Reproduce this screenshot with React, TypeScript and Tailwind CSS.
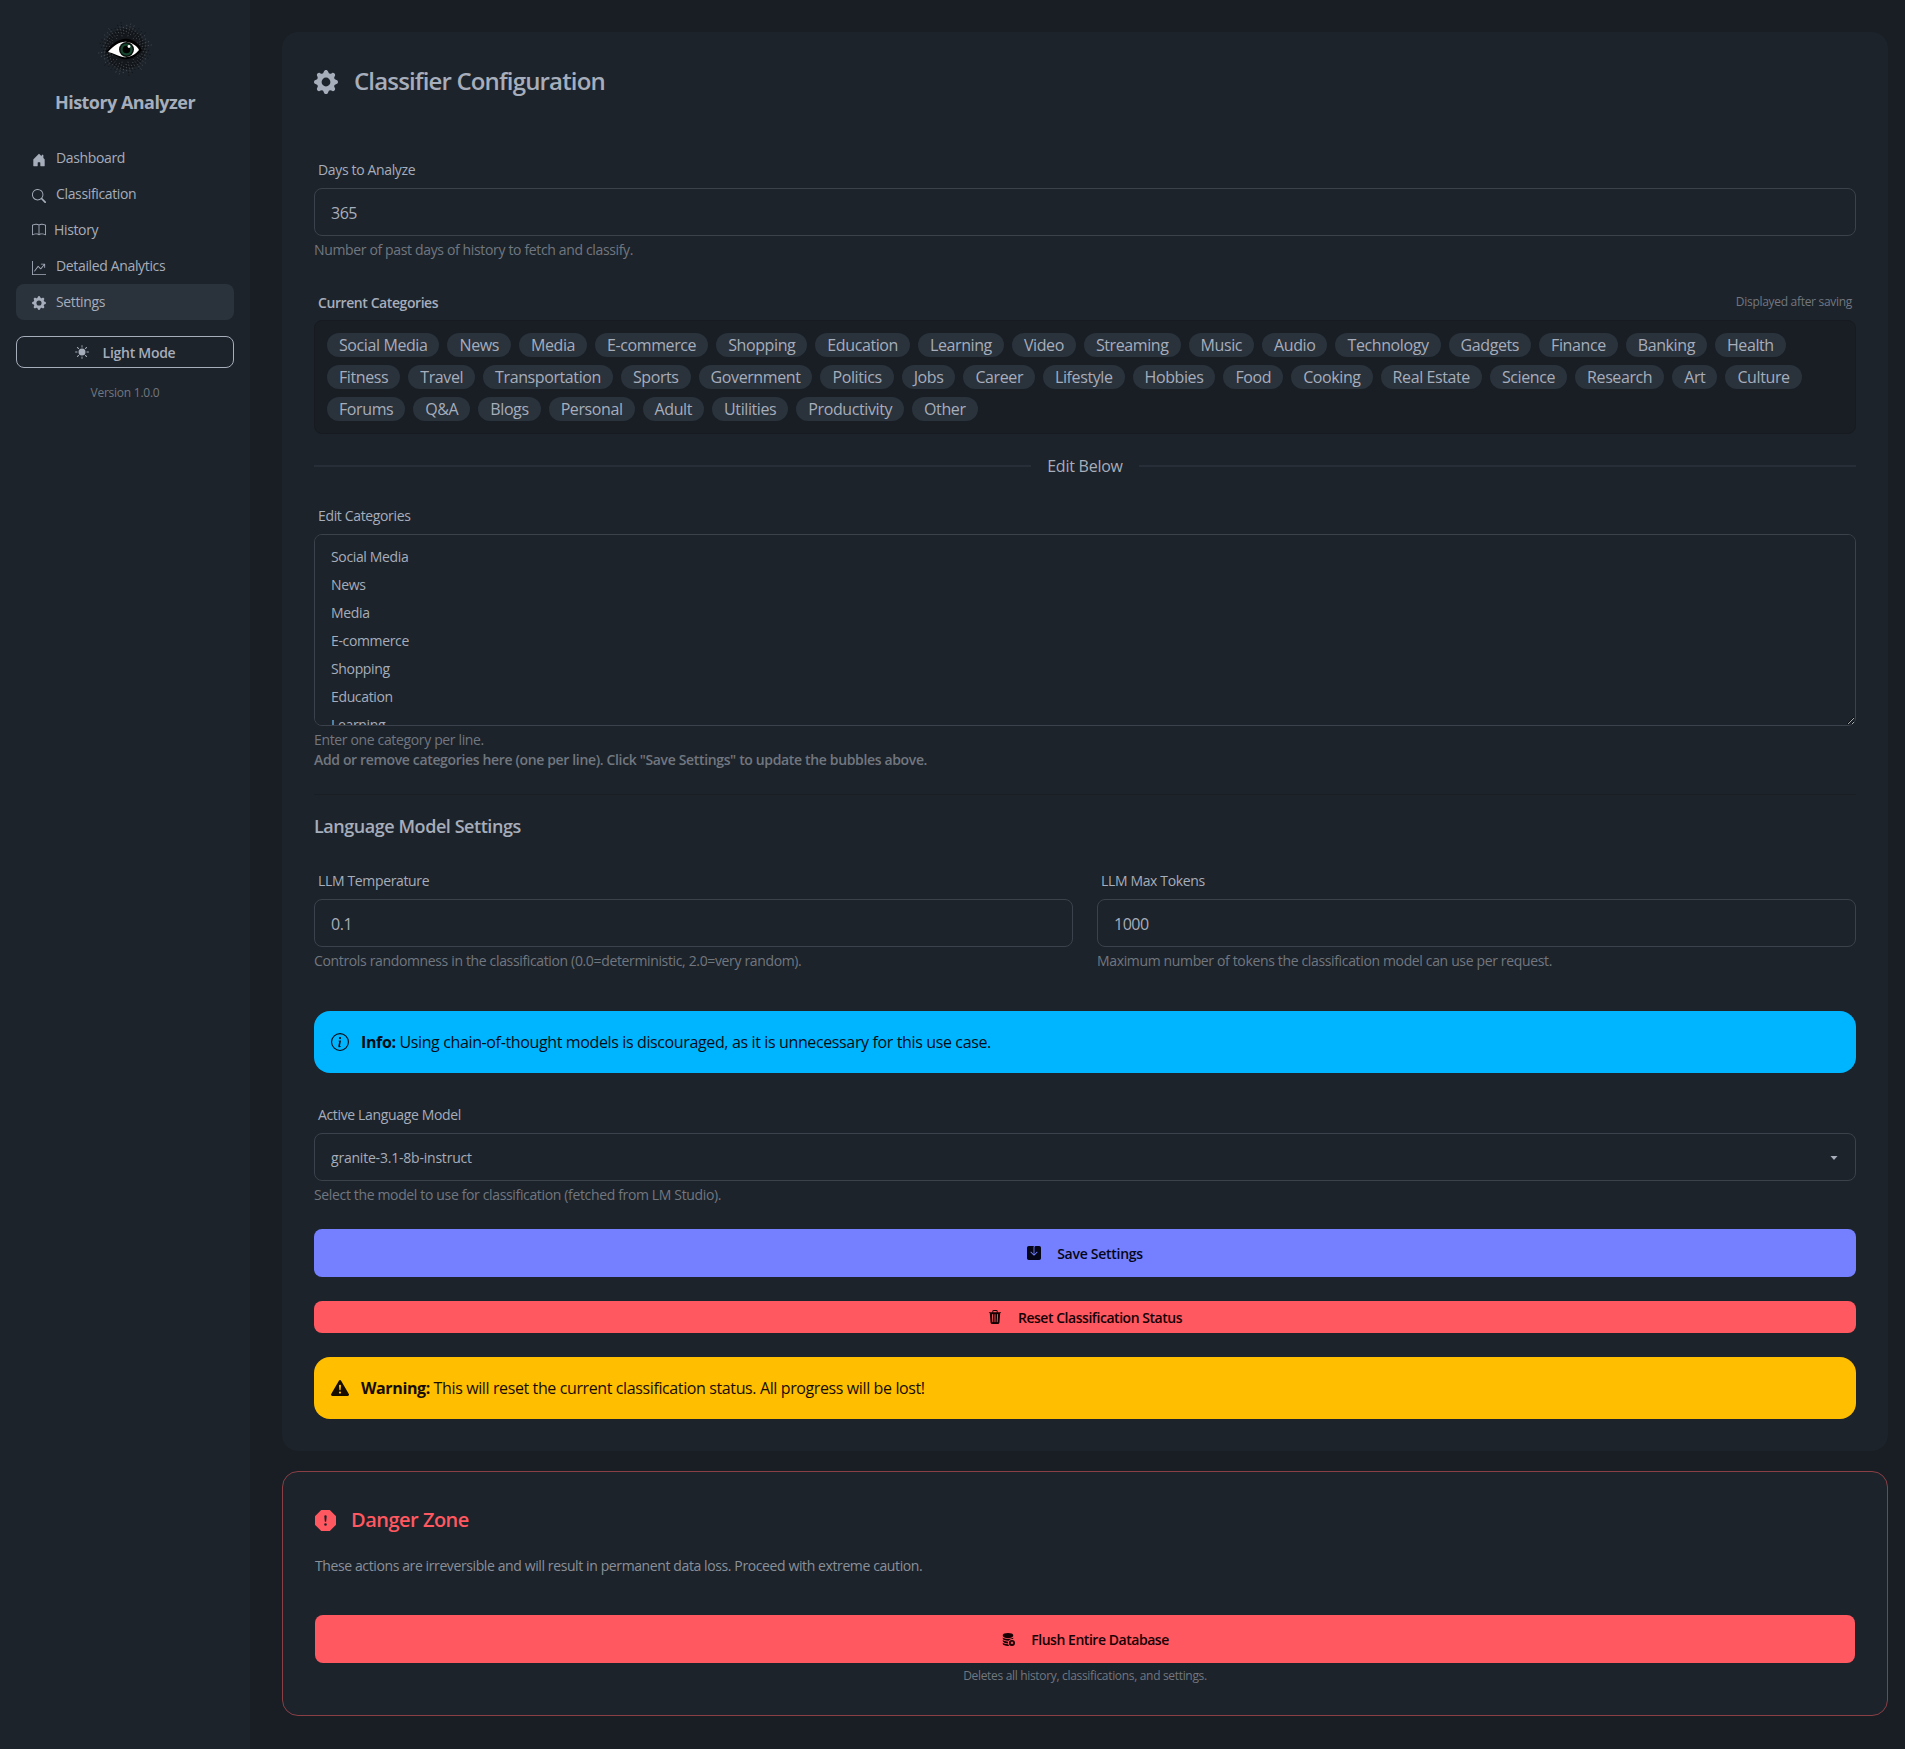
import React from "react";
import {
  BsHouseDoorFill, BsSearch, BsBook, BsGraphUpArrow, BsGearFill, BsSunFill, BsInfoCircle,
  BsExclamationTriangleFill, BsExclamationOctagonFill, BsSaveFill, BsTrash3Fill, BsDatabaseFillX,
} from "react-icons/bs";

const cats = ["Social Media","News","Media","E-commerce","Shopping","Education","Learning","Video","Streaming","Music","Audio","Technology","Gadgets","Finance","Banking","Health","Fitness","Travel","Transportation","Sports","Government","Politics","Jobs","Career","Lifestyle","Hobbies","Food","Cooking","Real Estate","Science","Research","Art","Culture","Forums","Q&A","Blogs","Personal","Adult","Utilities","Productivity","Other"];

function Logo() {
  const rays = Array.from({ length: 84 }, (_, i) => {
    const a = (i / 84) * Math.PI * 2;
    const r1 = 13 + (i * 7) % 6;
    const r2 = 21 + (i * 11) % 7;
    return { x1: 28 + Math.cos(a) * r1, y1: 28 + Math.sin(a) * r1, x2: 28 + Math.cos(a) * r2, y2: 28 + Math.sin(a) * r2 };
  });
  return (
    <svg width="56" height="56" viewBox="0 0 56 56">
      <circle cx="28" cy="28" r="20" fill="#14181d" />
      {rays.map((r, i) => (
        <line key={i} x1={r.x1} y1={r.y1} x2={r.x2} y2={r.y2} stroke={i % 2 === 0 ? "#50555b" : "#0b0d10"} strokeWidth="0.8" strokeDasharray="1.2 1.8" />
      ))}
      <path d="M9 31 C15 22 23 17 31 18 C38 19 43 24 45 29 C40 36 33 39 26 38 C21 37 16 32 9 31 Z" fill="#000" />
      <path d="M11 31 C17 24 24 20 30 21 C36 22 40 25 42 29 C38 34 32 37 26 36 C21 35 16 32 11 31 Z" fill="#fff" />
      <circle cx="29.5" cy="28.5" r="7.5" fill="#0a0f0c" />
      <circle cx="29.5" cy="28.5" r="6" fill="#14452c" />
      <circle cx="29.5" cy="28.5" r="3.8" fill="#000" />
      <circle cx="32" cy="25.5" r="1.4" fill="#fff" />
    </svg>
  );
}

function NavItem({ icon, label, active, gap = "gap-[10px]", offset = "mt-1" }: { icon: React.ReactNode; label: string; active?: boolean; gap?: string; offset?: string }) {
  return (
    <a className={`flex h-9 items-center ${gap} rounded-lg pl-4 text-[14px] text-[#a6adbb] ${active ? "bg-[#2a323c]" : ""}`}>
      <span className={`${offset} flex w-[14px] justify-center`}>{icon}</span>
      <span className="-mt-px">{label}</span>
    </a>
  );
}

function Label({ children }: { children: React.ReactNode }) {
  return <label className="block h-5 px-1 text-[14px] leading-5 text-[#a6adbb]">{children}</label>;
}

function Help({ children, className = "" }: { children: React.ReactNode; className?: string }) {
  return <p className={`h-5 text-[14px] leading-5 text-[#717780] ${className}`}>{children}</p>;
}

const fieldClass = "mt-2 block h-12 w-full rounded-lg border border-[#3b424c] bg-[#1d232a] px-4 pt-[2px] text-[16px] tracking-[-0.03em] text-[#a6adbb] outline-none";

export default function App() {
  return (
    <div className="flex min-h-screen bg-[#191e24] font-['Open_Sans',sans-serif] tracking-[-0.022em]">
      <aside className="w-[250px] shrink-0 bg-[#1d232a] px-4">
        <div className="flex h-[140px] flex-col items-center pt-[21px]">
          <Logo />
          <h1 className="mt-[11px] text-[18px] font-bold leading-7 tracking-[-0.03em] text-[#a6adbb]">History Analyzer</h1>
        </div>
        <nav>
          <NavItem icon={<BsHouseDoorFill size={14} color="#a6adbb" />} label="Dashboard" />
          <NavItem icon={<BsSearch size={14} color="#a6adbb" />} label="Classification" />
          <NavItem gap="gap-2" offset="" icon={<BsBook size={14} color="#a6adbb" />} label="History" />
          <NavItem icon={<BsGraphUpArrow size={14} color="#a6adbb" />} label="Detailed Analytics" />
          <NavItem active offset="mt-0.5" icon={<BsGearFill size={14} color="#a6adbb" />} label="Settings" />
        </nav>
        <button className="mt-4 flex h-8 w-full items-center justify-center gap-[14px] rounded-lg border border-[#a6adbb] text-[14px] font-semibold tracking-[-0.02em] text-[#a6adbb]">
          <BsSunFill size={14} />
          Light Mode
        </button>
        <p className="mt-[17px] text-center text-[12px] leading-4 tracking-[-0.02em] text-[#717780]">Version 1.0.0</p>
      </aside>

      <main className="flex min-w-0 flex-1 flex-col gap-5 pb-8 pl-8 pr-[17px] pt-8">
        <section className="rounded-2xl bg-[#1d232a] p-8">
          <div className="flex h-9 items-center gap-4 text-[#a6adbb]">
            <BsGearFill size={24} />
            <h2 className="-mt-0.5 text-[24px] font-semibold leading-9 tracking-[-0.035em]">Classifier Configuration</h2>
          </div>

          <div className="mt-[60px]">
            <Label>Days to Analyze</Label>
            <input className={fieldClass} defaultValue="365" />
            <Help className="mt-1">Number of past days of history to fetch and classify.</Help>
          </div>

          <div className="mt-8">
            <div className="flex h-5 items-center justify-between px-1">
              <span className="text-[14px] font-semibold tracking-[-0.03em] text-[#a6adbb]">Current Categories</span>
              <span className="text-[12px] tracking-[-0.025em] text-[#717780]">Displayed after saving</span>
            </div>
            <div className="mt-2 flex flex-wrap gap-2 rounded-lg border border-[#171b21] bg-[#191e24] p-3">
              {cats.map((c) => (
                <span key={c} className="flex h-6 items-center rounded-full bg-[#2a323c] px-3 text-[16px] tracking-[-0.025em] text-[#a6adbb]">{c}</span>
              ))}
            </div>
          </div>

          <div className="mt-5 flex h-6 items-center gap-4 text-[16px] tracking-[-0.015em] text-[#a6adbb]">
            <div className="h-0.5 flex-1 bg-[#272e37]" />
            <span>Edit Below</span>
            <div className="h-0.5 flex-1 bg-[#272e37]" />
          </div>

          <div className="mt-7">
            <Label>Edit Categories</Label>
            <textarea
              className="mt-2 block h-[192px] w-full rounded-lg border border-[#3b424c] bg-[#1d232a] px-4 py-2 text-[14px] leading-7 text-[#a6adbb] outline-none [scrollbar-width:none]"
              defaultValue={cats.join("\n")}
            />
            <Help className="mt-1">Enter one category per line.</Help>
            <Help className="font-semibold tracking-[-0.025em]">Add or remove categories here (one per line). Click "Save Settings" to update the bubbles above.</Help>
          </div>

          <div className="mt-6 border-t border-[#191e24] pt-[17px]">
            <h3 className="text-[18px] font-semibold leading-7 tracking-[-0.025em] text-[#a6adbb]">Language Model Settings</h3>
          </div>

          <div className="mt-[31px] grid grid-cols-2 gap-6">
            <div>
              <Label>LLM Temperature</Label>
              <input className={fieldClass} defaultValue="0.1" />
              <Help className="mt-1">Controls randomness in the classification (0.0=deterministic, 2.0=very random).</Help>
            </div>
            <div>
              <Label>LLM Max Tokens</Label>
              <input className={fieldClass} defaultValue="1000" />
              <Help className="mt-1">Maximum number of tokens the classification model can use per request.</Help>
            </div>
          </div>

          <div className="mt-10 flex h-[62px] items-center gap-3 rounded-2xl bg-[#00b5ff] px-[17px] text-[16px] tracking-[-0.023em] text-[#000c16]">
            <BsInfoCircle size={18} />
            <span><strong className="font-bold">Info:</strong> Using chain-of-thought models is discouraged, as it is unnecessary for this use case.</span>
          </div>

          <div className="mt-8">
            <Label>Active Language Model</Label>
            <div className="relative">
              <select className="mt-2 block h-12 w-full appearance-none rounded-lg border border-[#3b424c] bg-[#1d232a] px-4 text-[14px] tracking-[-0.015em] text-[#a6adbb] outline-none">
                <option>granite-3.1-8b-instruct</option>
              </select>
              <svg className="absolute right-[18px] top-[22px]" width="8" height="6" viewBox="0 0 8 6"><path d="M0.5 1 L7.5 1 L4 5 Z" fill="#a6adbb" /></svg>
            </div>
            <Help className="mt-1">Select the model to use for classification (fetched from LM Studio).</Help>
          </div>

          <button className="mt-6 flex h-12 w-full items-center justify-center gap-4 rounded-lg bg-[#7480ff] text-[14px] font-semibold tracking-[-0.02em] text-[#050617]">
            <BsSaveFill size={14} />
            Save Settings
          </button>

          <button className="mt-6 flex h-8 w-full items-center justify-center gap-4 rounded-lg bg-[#ff5861] text-[14px] font-semibold tracking-[-0.033em] text-[#160003]">
            <BsTrash3Fill size={14} />
            Reset Classification Status
          </button>

          <div className="mt-6 flex h-[62px] items-center gap-3 rounded-2xl bg-[#ffbe00] px-[17px] text-[16px] tracking-[-0.024em] text-[#160d00]">
            <BsExclamationTriangleFill size={18} />
            <span><strong className="font-bold">Warning:</strong> This will reset the current classification status. All progress will be lost!</span>
          </div>
        </section>

        <section className="rounded-2xl border border-[#8a3f47] bg-[#1d232a] px-8 pb-[31px] pt-8">
          <div className="mt-0.5 flex h-7 items-center gap-[15px] text-[#ff5861]">
            <BsExclamationOctagonFill size={21} />
            <h2 className="text-[20px] font-semibold leading-7 tracking-[-0.025em]">Danger Zone</h2>
          </div>
          <p className="mt-[22px] text-[14px] leading-5 tracking-[-0.028em] text-[#8a909a]">These actions are irreversible and will result in permanent data loss. Proceed with extreme caution.</p>
          <button className="mt-[39px] flex h-12 w-full items-center justify-center gap-4 rounded-lg bg-[#ff5861] text-[14px] font-semibold tracking-[-0.033em] text-[#160003]">
            <BsDatabaseFillX size={14} />
            Flush Entire Database
          </button>
          <p className="mt-[5px] text-center text-[12px] leading-4 tracking-[-0.027em] text-[#717780]">Deletes all history, classifications, and settings.</p>
        </section>
      </main>
    </div>
  );
}
